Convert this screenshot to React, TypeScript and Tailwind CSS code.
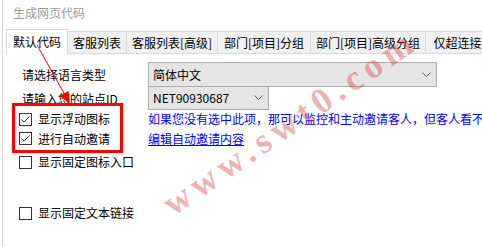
import React from "react";

const font = { fontFamily: '"Noto Sans CJK SC", "Noto Sans", sans-serif' };

function Check({ checked }: { checked?: boolean }) {
  return (
    <div className="relative w-[13px] h-[13px] border border-[#333333] bg-white shrink-0">
      {checked && (
        <svg className="absolute inset-0" width="11" height="11" viewBox="0 0 11 11">
          <polyline points="1.5,5.5 4,8 9.5,2.5" fill="none" stroke="#333333" strokeWidth="1" />
        </svg>
      )}
    </div>
  );
}

function Chevron() {
  return (
    <svg width="9" height="6" viewBox="0 0 9 6">
      <polyline points="0.5,0.5 4.5,4.5 8.5,0.5" fill="none" stroke="#555555" strokeWidth="1" />
    </svg>
  );
}

function CheckRow({ label, checked, h }: { label: string; checked?: boolean; h: string }) {
  return (
    <div className={`flex items-center gap-[6px] ${h}`}>
      <Check checked={checked} />
      <span className="text-[12px] leading-[16px] text-black whitespace-nowrap">{label}</span>
    </div>
  );
}

export default function App() {
  const tabs = [
    { t: "客服列表", w: "w-[59px]" },
    { t: "客服列表[高级]", w: "w-[91px]" },
    { t: "部门[项目]分组", w: "w-[93px]" },
    { t: "部门[项目]高级分组", w: "w-[115px]" },
    { t: "仅超连接", w: "w-[64px]" },
  ];
  return (
    <div className="relative w-[482px] h-[247px] bg-white overflow-hidden pl-[2px]" style={font}>
      <div className="h-full border-l border-[#d4d4d4]">
        {/* title */}
        <div className="h-[29px] pl-[10px] flex items-center pb-[3px]">
          <span className="text-[12px] leading-[16px] text-[#9a9a9a]">生成网页代码</span>
        </div>
        {/* tabs */}
        <div className="h-[25px] flex items-start pl-[3px] whitespace-nowrap">
          <div className="w-[62px] h-[25px] bg-white border border-b-0 border-[#d9d9d9] flex items-center justify-center pb-[1px] shrink-0">
            <span className="text-[12px] leading-[16px] text-black">默认代码</span>
          </div>
          {tabs.map((tb) => (
            <div
              key={tb.t}
              className={`${tb.w} h-[23px] mt-[2px] bg-[#f0f0f0] border border-l-0 border-[#d9d9d9] flex items-center justify-center shrink-0`}
            >
              <span className="text-[12px] leading-[16px] text-black">{tb.t}</span>
            </div>
          ))}
        </div>
        {/* content */}
        <div className="pl-[16px] pt-[8px]">
          <div className="grid grid-cols-[129px_1fr]">
            <div className="h-[25px] flex items-center pl-[3px]">
              <span className="text-[12px] leading-[16px] text-black whitespace-nowrap">请选择语言类型</span>
            </div>
            <div className="h-[25px] w-[289px] bg-[#e5e5e5] border border-[#adadad] flex items-center justify-between pl-[4px] pr-[5px]">
              <span className="text-[12px] leading-[16px] text-black">简体中文</span>
              <Chevron />
            </div>
            <div className="h-[23px] flex items-center pl-[3px]">
              <span className="text-[12px] leading-[16px] text-black whitespace-nowrap">请输入您的站点ID</span>
            </div>
            <div className="h-[23px] w-[121px] bg-[#e5e5e5] border border-t-0 border-[#adadad] flex items-center justify-between pl-[4px] pr-[5px]">
              <span className="text-[12px] leading-[16px] text-black">NET90930687</span>
              <Chevron />
            </div>

            <CheckRow label="显示浮动图标" checked h="h-[18px]" />
            <div className="h-[18px] flex items-center">
              <span className="text-[12px] leading-[16px] text-[#0000ff] whitespace-nowrap">
                如果您没有选中此项，那可以监控和主动邀请客人，但客人看不到图标
              </span>
            </div>
            <CheckRow label="进行自动邀请" checked h="h-[21px]" />
            <div className="h-[21px] flex items-center">
              <span className="text-[12px] leading-[16px] text-[#0000ff] underline whitespace-nowrap">编辑自动邀请内容</span>
            </div>
          </div>
          <CheckRow label="显示固定图标入口" h="h-[26px]" />
          <div className="mt-[27px]">
            <CheckRow label="显示固定文本链接" h="h-[22px]" />
          </div>
        </div>
      </div>

      {/* watermark */}
      <span
        className="absolute left-[290px] top-[122px] -translate-x-1/2 -translate-y-1/2 -rotate-[34.5deg] whitespace-nowrap text-[36px] leading-[40px] font-bold tracking-[6px] text-[rgba(210,70,70,0.42)] pointer-events-none"
        style={{ fontFamily: '"Liberation Serif", serif' }}
      >
        www.swt0.com
      </span>

      {/* red annotation box */}
      <div className="absolute left-[12px] top-[103px] w-[111px] h-[50px] border-[3px] border-[#ff0000] pointer-events-none" />

      {/* red arrow */}
      <svg className="absolute left-0 top-0 pointer-events-none" width="482" height="247" viewBox="0 0 482 247">
        <line x1="37" y1="45" x2="65" y2="95" stroke="#ff0000" strokeWidth="1" />
        <polygon points="70,104 59.7,95.9 68.5,91.1" fill="#ff0000" />
      </svg>
    </div>
  );
}
